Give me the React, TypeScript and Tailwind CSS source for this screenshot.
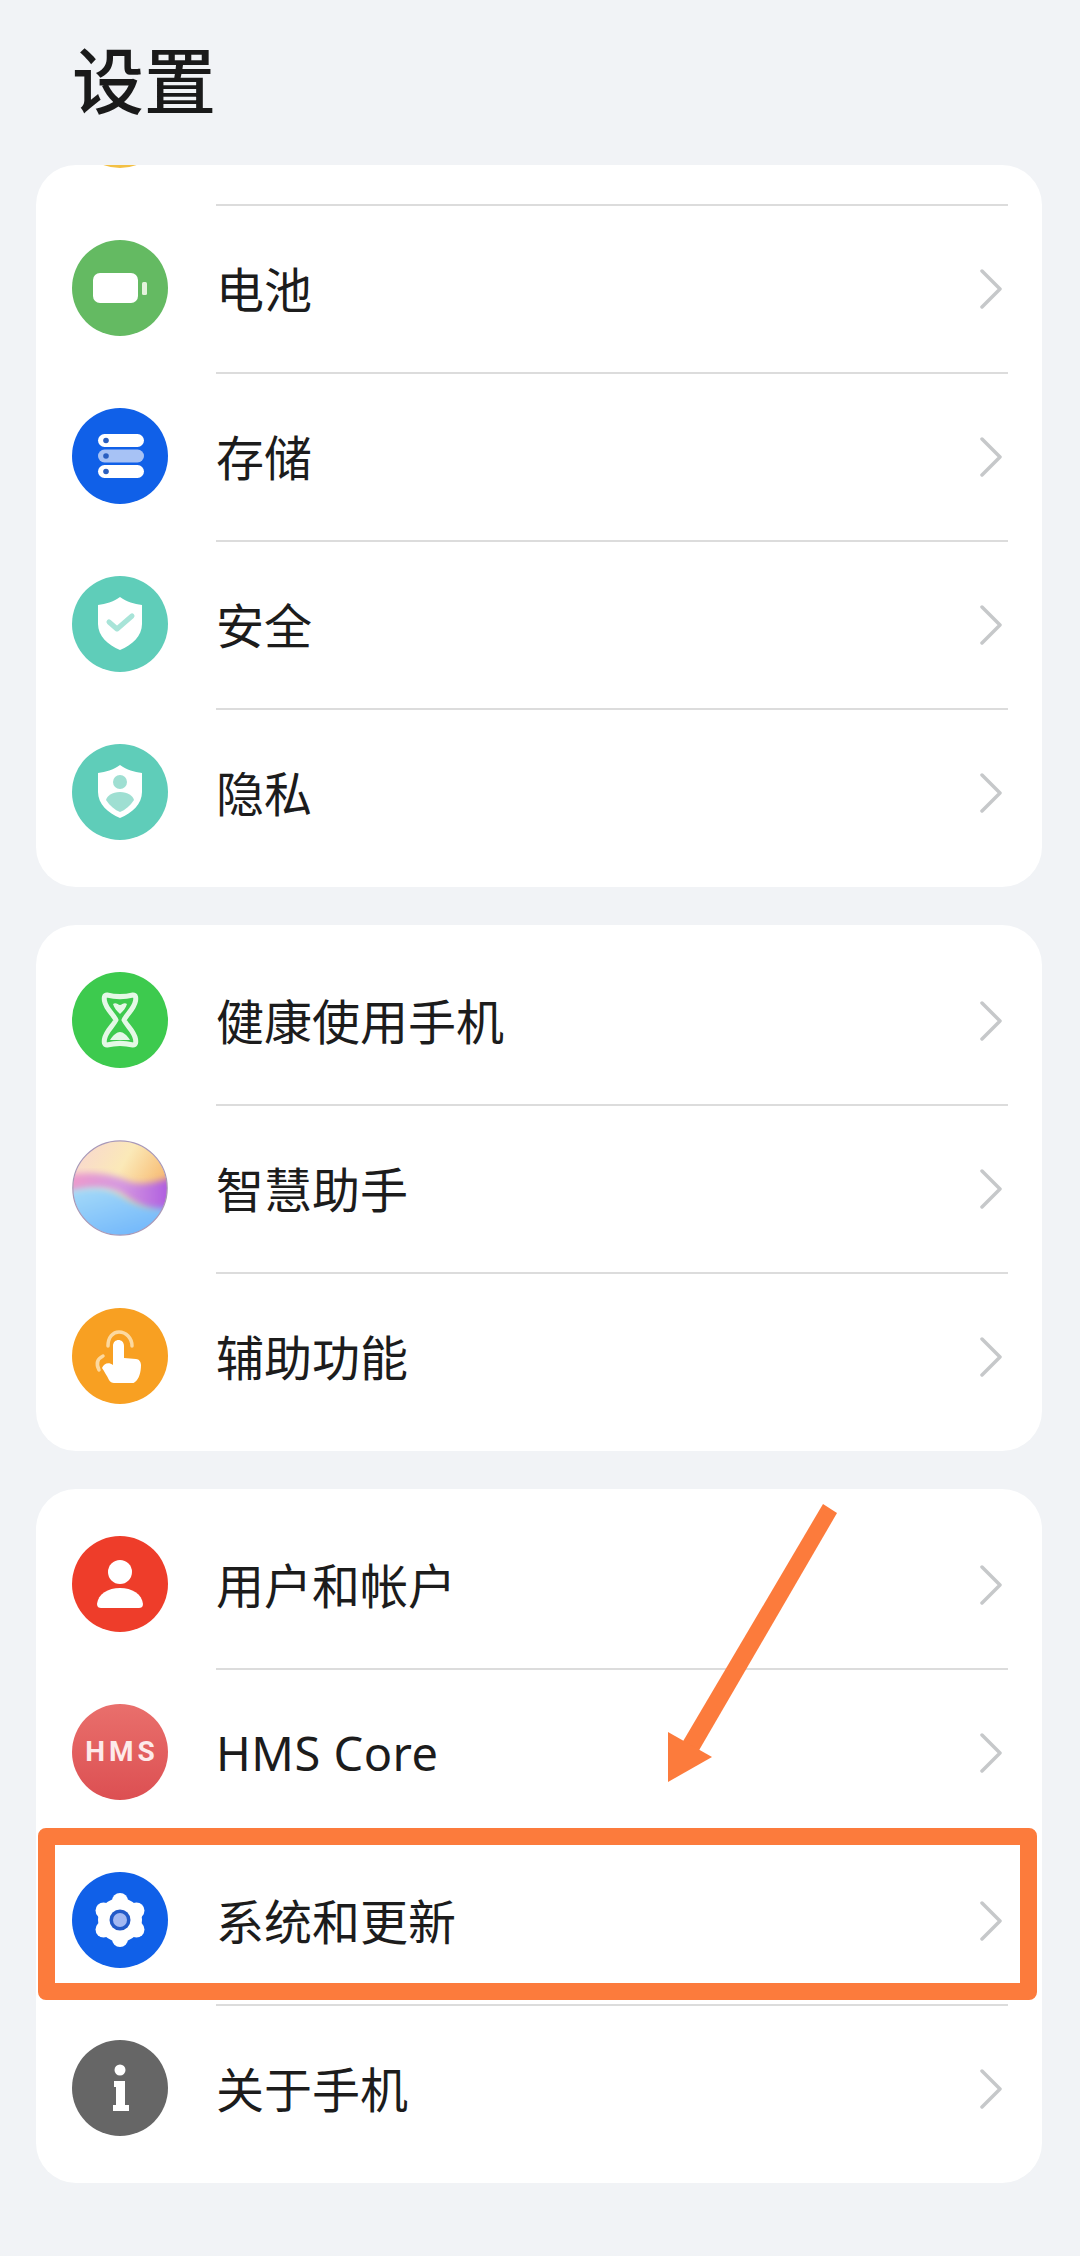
import React from 'react';

const CJK = "font-['Noto_Sans_CJK_SC','Noto_Sans',sans-serif]";

// every badge is drawn in a 96x96 box
const Badge: React.FC<{ fill: string; children?: React.ReactNode }> = ({ fill, children }) => (
  <svg viewBox="0 0 96 96" className="w-24 h-24 shrink-0 block">
    <circle cx="48" cy="48" r="48" fill={fill} />
    {children}
  </svg>
);

const SHIELD = 'M48 21 C55 26 62 28 70 29 V48 C70 60 60 69 48 74 C36 69 26 60 26 48 V29 C34 28 41 26 48 21 Z';

const BatteryIcon = () => (
  <Badge fill="#64ba62">
    <rect x="21" y="33" width="45" height="30" rx="7" fill="#fff" />
    <rect x="70" y="42" width="5" height="13" rx="1.5" fill="#e4f3dc" />
  </Badge>
);

const StorageIcon = () => (
  <Badge fill="#1060e8">
    <rect x="26" y="26" width="46" height="13" rx="6.5" fill="#fff" />
    <rect x="26" y="41.5" width="46" height="13" rx="6.5" fill="#a7c2f5" />
    <rect x="26" y="57" width="46" height="13" rx="6.5" fill="#fff" />
    <circle cx="34" cy="32.5" r="2.8" fill="#2a5fc0" />
    <circle cx="34" cy="48" r="2.8" fill="#2a5fc0" />
    <circle cx="34" cy="63.5" r="2.8" fill="#2a5fc0" />
  </Badge>
);

const SecurityIcon = () => (
  <Badge fill="#5fcdb9">
    <path d={SHIELD} fill="#fff" />
    <path d="M37 46 L45 53 L60 40" fill="none" stroke="#a8e4d8" strokeWidth="5" strokeLinecap="round" strokeLinejoin="round" />
  </Badge>
);

const PrivacyIcon = () => (
  <Badge fill="#5fcdb9">
    <path d={SHIELD} fill="#fff" />
    <circle cx="48" cy="38" r="7" fill="#9fdfd2" />
    <path d="M48 48 C56 48 61 52 62 56 C58 62 53 66 48 68 C43 66 38 62 34 56 C35 52 40 48 48 48 Z" fill="#9fdfd2" />
  </Badge>
);

const HourglassIcon = () => (
  <Badge fill="#3dca4e">
    <path
      d="M35 23 C43 25 53 25 61 23 C64 23 64 26 63.5 29 C62 37 55 42 52 48 C55 54 62 59 63.5 67 C64 70 64 73 61 73 C53 71 43 71 35 73 C32 73 32 70 32.5 67 C34 59 41 54 44 48 C41 42 34 37 32.5 29 C32 26 32 23 35 23 Z"
      fill="none"
      stroke="#e4f8e6"
      strokeWidth="5"
      strokeLinejoin="round"
    />
    <path d="M41 32 C44 30 46 33 48 33 C50 33 52 30 55 32 C54 36 51 39 48 42 C45 39 42 36 41 32 Z" fill="#e4f8e6" />
    <path d="M38 68 C41 63 45 60 48 60 C51 60 55 63 58 68 Z" fill="#e4f8e6" />
  </Badge>
);

const AssistantIcon = () => (
  <svg viewBox="0 0 96 96" className="w-24 h-24 shrink-0 block">
    <defs>
      <clipPath id="orb">
        <circle cx="48" cy="48" r="47" />
      </clipPath>
      <linearGradient id="orbTop" x1="0" y1="0" x2="1" y2="0.6">
        <stop offset="0" stopColor="#f8d4d4" />
        <stop offset="0.5" stopColor="#fbe9b8" />
        <stop offset="1" stopColor="#f6ae5e" />
      </linearGradient>
      <linearGradient id="orbBand" x1="0" y1="0" x2="1" y2="0">
        <stop offset="0" stopColor="#f09ac8" />
        <stop offset="0.5" stopColor="#d69ae0" />
        <stop offset="1" stopColor="#a954e0" />
      </linearGradient>
      <linearGradient id="orbLow" x1="0" y1="0" x2="0.6" y2="1">
        <stop offset="0" stopColor="#a8dcf8" />
        <stop offset="1" stopColor="#6db4fb" />
      </linearGradient>
      <filter id="soft">
        <feGaussianBlur stdDeviation="3" />
      </filter>
    </defs>
    <g clipPath="url(#orb)">
      <rect width="96" height="96" fill="url(#orbTop)" />
      <path filter="url(#soft)" d="M-8 36 C20 30 40 34 58 42 C72 46 84 42 104 36 V78 C80 72 66 66 50 54 C34 46 14 48 -8 56 Z" fill="url(#orbBand)" />
      <path filter="url(#soft)" d="M-8 52 C18 46 34 46 50 56 C64 66 80 70 104 68 V104 H-8 Z" fill="url(#orbLow)" />
    </g>
    <circle cx="48" cy="48" r="47.2" fill="none" stroke="#a898b8" strokeWidth="1.2" />
  </svg>
);

const TouchIcon = () => (
  <Badge fill="#f8a022">
    <path d="M36 38 C36 29 41 24 47 24 C54 24 60 30 60 38" fill="none" stroke="#fcd9a0" strokeWidth="3.5" strokeLinecap="round" />
    <path d="M27 62 C24 56 25 51 31 48" fill="none" stroke="#fcd9a0" strokeWidth="3.5" strokeLinecap="round" />
    <path
      d="M41 38 C41 30 52 30 52 38 V50 L64 51 C67 51 69 54 69 57 C69 64 67 71 63 74 C62 75 61 75 60 75 H42 C40 75 38 74 37 72 C35 68 32 63 30 60 C32 55 37 54 41 57 Z"
      fill="#fff"
    />
  </Badge>
);

const UserIcon = () => (
  <Badge fill="#ee3d2a">
    <circle cx="48" cy="36" r="12" fill="#fff" />
    <path d="M48 52 C60 52 70 58 71 68 C71 71 69 72 67 72 H29 C27 72 25 71 25 68 C26 58 36 52 48 52 Z" fill="#fff" />
  </Badge>
);

const HmsIcon = () => (
  <div className="w-24 h-24 shrink-0 rounded-full bg-gradient-to-b from-[#e96f6c] to-[#dc4f52] flex items-center justify-center">
    <span className="font-['Roboto',sans-serif] font-bold text-[28px] leading-none tracking-[4px] pl-[4px] text-[#fdeaea]">HMS</span>
  </div>
);

// six lobes round a hub
const GearIcon = () => (
  <Badge fill="#1060e8">
    <circle cx="48" cy="48" r="22" fill="#fff" />
    {[0, 60, 120, 180, 240, 300].map((deg) => {
      const rad = ((deg + 90) * Math.PI) / 180;
      return <circle key={deg} cx={48 + 19 * Math.cos(rad)} cy={48 + 19 * Math.sin(rad)} r="8" fill="#fff" />;
    })}
    <circle cx="48" cy="48" r="10.5" fill="#2259c8" />
    <circle cx="48" cy="48" r="7" fill="#a3b8f2" />
  </Badge>
);

const InfoIcon = () => (
  <Badge fill="#666666">
    <circle cx="48" cy="30" r="5.5" fill="#fff" />
    <path d="M42 41 H53 V65 H57 V71 H41 V65 H44 V47 H42 Z" fill="#fff" />
  </Badge>
);

const Chevron = () => (
  <svg viewBox="0 0 22 40" className="w-[22px] h-10 shrink-0" fill="none" stroke="#c6c8ca" strokeWidth="3.5" strokeLinecap="round" strokeLinejoin="round">
    <path d="M2 2 L20 20 L2 38" />
  </svg>
);

const Row: React.FC<{ icon: React.ReactNode; label: string; divider?: boolean; latin?: boolean }> = ({ icon, label, divider = true, latin }) => (
  <div className="flex items-center h-[168px] pl-9 pr-[34px]">
    {icon}
    <div className={`flex-1 self-stretch ml-12 pr-[6px] flex items-center justify-between border-t-2 ${divider ? 'border-[#dcdcdc]' : 'border-transparent'}`}>
      <span className={`leading-none text-[#1c1c1c] ${latin ? "font-['Noto_Sans',sans-serif] text-[47px] tracking-[0.5px]" : `text-[48px] mb-[5px] ${CJK}`}`}>{label}</span>
      <Chevron />
    </div>
  </div>
);

const Card: React.FC<{ className?: string; children: React.ReactNode }> = ({ className = '', children }) => (
  <div className={`bg-white rounded-[40px] overflow-hidden py-[11px] ${className}`}>{children}</div>
);

export default function App() {
  return (
    <div className="relative w-[1080px] h-[2256px] bg-[#f1f3f6] overflow-hidden pl-9 pr-[38px]">
      <header className="h-[165px] pl-9 pt-[39px]">
        <h1 className={`text-[72px] leading-[76px] font-medium text-[#1a1a1a] ${CJK}`}>设置</h1>
      </header>

      <Card className="pt-0">
        {/* row scrolled almost out of view, only its badge still peeks in */}
        <div className="-mt-[129px] h-[168px] pl-9 flex items-center">
          <div className="w-24 h-24 rounded-full bg-[#f3c044]" />
        </div>
        <Row icon={<BatteryIcon />} label="电池" />
        <Row icon={<StorageIcon />} label="存储" />
        <Row icon={<SecurityIcon />} label="安全" />
        <Row icon={<PrivacyIcon />} label="隐私" />
      </Card>

      <Card className="mt-[38px]">
        <Row icon={<HourglassIcon />} label="健康使用手机" divider={false} />
        <Row icon={<AssistantIcon />} label="智慧助手" />
        <Row icon={<TouchIcon />} label="辅助功能" />
      </Card>

      <Card className="mt-[38px]">
        <Row icon={<UserIcon />} label="用户和帐户" divider={false} />
        <Row icon={<HmsIcon />} label="HMS Core" latin />
        <Row icon={<GearIcon />} label="系统和更新" />
        <Row icon={<InfoIcon />} label="关于手机" />
      </Card>

      {/* hand-drawn callout over the list */}
      <div className="absolute left-[38px] top-[1828px] w-[999px] h-[172px] border-[17px] border-[#fc7b3c] rounded-[8px]" />
      <svg viewBox="0 0 190 290" className="absolute left-[660px] top-[1500px] w-[190px] h-[290px]">
        <path d="M163 4 L177 13 L38 252 L22 243 Z" fill="#fc7b3c" />
        <path d="M8 282 L8 232 L52 257 Z" fill="#fc7b3c" />
      </svg>
    </div>
  );
}
